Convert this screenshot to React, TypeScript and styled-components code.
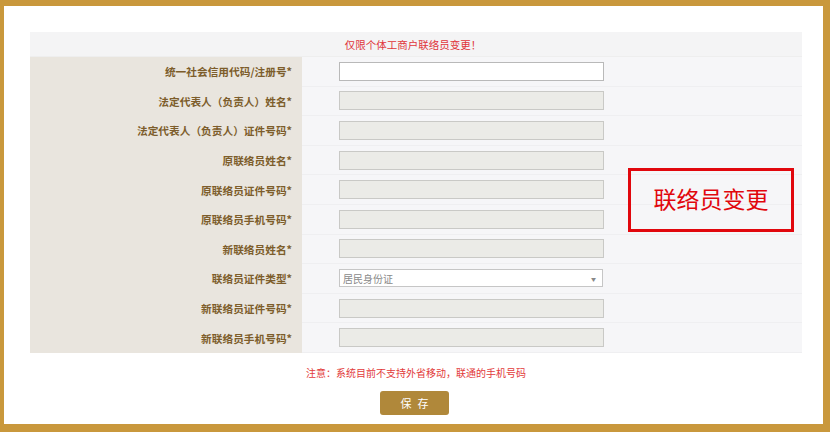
import React from 'react';
import styled, { createGlobalStyle } from 'styled-components';

const GlobalStyle = createGlobalStyle`
  html, body {
    margin: 0;
    padding: 0;
    background: #ffffff;
    font-family: "Noto Sans CJK SC", "Noto Sans", sans-serif;
  }
`;

const Frame = styled.div`
  position: relative;
  box-sizing: border-box;
  width: 830px;
  height: 432px;
  border-style: solid;
  border-color: #c9983c;
  border-width: 6px 7px 8px 4px;
  background: #ffffff;
  padding: 26px 21px 0 26px;
`;

const Table = styled.div`
  width: 772px;
  display: flex;
  flex-direction: column;
  background: #f6f6f8;
`;

const HeaderRow = styled.div`
  height: 25px;
  display: flex;
  align-items: center;
  justify-content: center;
  background: #f4f4f5;
  color: #e0363b;
  font-size: 10.5px;
  padding-right: 6px;
  border-bottom: 1px solid #eeeeee;
  box-sizing: border-box;
`;

const Row = styled.div`
  height: 29.6px;
  display: grid;
  grid-template-columns: 272px 1fr;
`;

const Label = styled.div`
  background: #e9e5de;
  display: flex;
  align-items: center;
  justify-content: flex-end;
  padding-right: 10px;
  color: #7d5d2b;
  font-weight: 700;
  font-size: 10.7px;
`;

const Cell = styled.div`
  display: flex;
  align-items: center;
  padding-left: 37px;
  border-bottom: 1px solid #efeff1;
  box-sizing: border-box;
`;

const TextBox = styled.div<{ $editable?: boolean }>`
  box-sizing: border-box;
  width: 265px;
  height: 19px;
  background: ${(p) => (p.$editable ? '#ffffff' : '#ebebe7')};
  border: 1px solid ${(p) => (p.$editable ? '#b9b9b9' : '#c9c9c6')};
`;

const SelectBox = styled.div`
  box-sizing: border-box;
  width: 264px;
  height: 18px;
  background: #ffffff;
  border: 1px solid #c6c6c6;
  display: flex;
  align-items: center;
  justify-content: space-between;
  padding: 0 6px 0 3px;
  color: #8a8a8a;
  font-size: 10px;
`;

const Caret = styled.span`
  font-size: 5px;
  color: #888888;
`;

const Note = styled.div`
  width: 772px;
  text-align: center;
  color: #e23a3a;
  font-size: 10px;
  margin-top: 13px;
  line-height: 13px;
  word-spacing: 2px;
`;

const ButtonBar = styled.div`
  width: 772px;
  display: flex;
  justify-content: center;
  margin-top: 12px;
  padding-right: 3px;
  box-sizing: border-box;
`;

const SaveButton = styled.button`
  width: 69px;
  height: 24px;
  border: none;
  border-radius: 3px;
  background: #b0883a;
  color: #ffffff;
  font-family: inherit;
  font-size: 11px;
  letter-spacing: 6px;
  padding: 0 0 0 6px;
`;

const Callout = styled.div`
  position: absolute;
  left: 624px;
  top: 162px;
  width: 166px;
  height: 64px;
  box-sizing: border-box;
  border: 3px solid #e1070d;
  display: flex;
  align-items: center;
  justify-content: center;
  color: #e1070d;
  font-size: 23px;
  padding-bottom: 4px;
`;

const fields: { label: string; kind: 'edit' | 'fixed' | 'select' }[] = [
  { label: '统一社会信用代码/注册号*', kind: 'edit' },
  { label: '法定代表人（负责人）姓名*', kind: 'fixed' },
  { label: '法定代表人（负责人）证件号码*', kind: 'fixed' },
  { label: '原联络员姓名*', kind: 'fixed' },
  { label: '原联络员证件号码*', kind: 'fixed' },
  { label: '原联络员手机号码*', kind: 'fixed' },
  { label: '新联络员姓名*', kind: 'fixed' },
  { label: '联络员证件类型*', kind: 'select' },
  { label: '新联络员证件号码*', kind: 'fixed' },
  { label: '新联络员手机号码*', kind: 'fixed' },
];

export default function App() {
  return (
    <>
      <GlobalStyle />
      <Frame>
        <Table>
          <HeaderRow>仅限个体工商户联络员变更！</HeaderRow>
          {fields.map((f) => (
            <Row key={f.label}>
              <Label>{f.label}</Label>
              <Cell>
                {f.kind === 'select' ? (
                  <SelectBox>
                    <span>居民身份证</span>
                    <Caret>▼</Caret>
                  </SelectBox>
                ) : (
                  <TextBox $editable={f.kind === 'edit'} />
                )}
              </Cell>
            </Row>
          ))}
        </Table>
        <Note>注意：系统目前不支持外省移动，联通的手机号码</Note>
        <ButtonBar>
          <SaveButton>保存</SaveButton>
        </ButtonBar>
        <Callout>联络员变更</Callout>
      </Frame>
    </>
  );
}
